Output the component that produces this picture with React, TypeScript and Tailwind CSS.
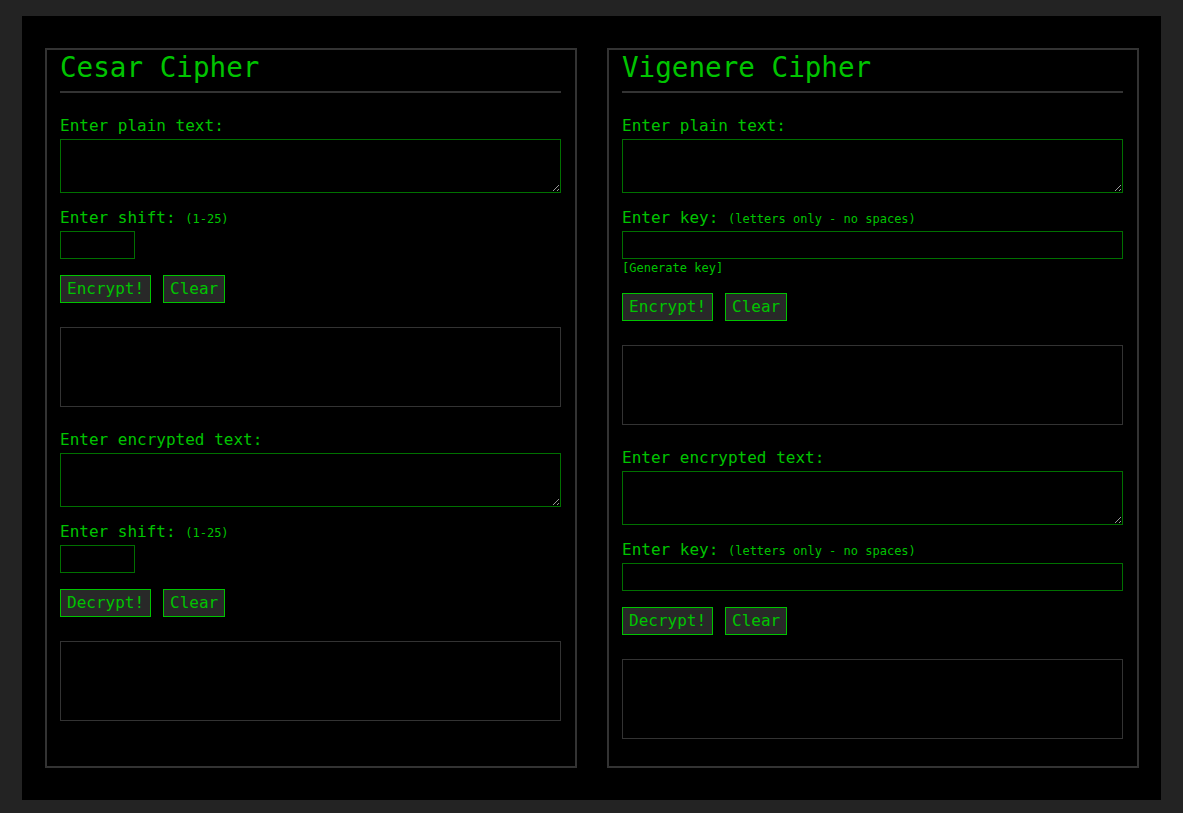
import React from 'react';

const mono = { fontFamily: '"DejaVu Sans Mono", "Liberation Mono", monospace' };

function Label({ text, hint }: { text: string; hint?: string }) {
  return (
    <div className="h-6 overflow-hidden text-[16px] leading-6 text-[#00c400]">
      {text}
      {hint && (
        <>
          {' '}
          <span className="text-[12px] leading-none">{hint}</span>
        </>
      )}
    </div>
  );
}

function Field({ wide }: { wide?: boolean }) {
  return (
    <input
      type="text"
      className={`block mt-px h-[28px] bg-black border border-[#007000] text-[#00c400] text-[16px] px-1 outline-none ${wide ? 'w-full' : 'w-[75px]'}`}
    />
  );
}

function Area() {
  return (
    <textarea className="block mt-px w-full h-[54px] bg-black border border-[#007000] text-[#00c400] text-[16px] p-1 outline-none [color-scheme:dark]" />
  );
}

function Btn({ children }: { children: React.ReactNode }) {
  return (
    <button className="h-[28px] px-[6px] bg-[#282828] border border-[#00c400] text-[#00c400] text-[16px] leading-none">
      {children}
    </button>
  );
}

function Output() {
  return <div className="mt-6 h-[80px] border border-[#333]" />;
}

function Section({
  label,
  action,
  keyed,
  generate,
}: {
  label: string;
  action: string;
  keyed: boolean;
  generate?: boolean;
}) {
  return (
    <div className="mt-[21px]">
      <Label text={label} />
      <Area />
      <div className="mt-[13px]">
        {keyed ? (
          <Label text="Enter key:" hint="(letters only - no spaces)" />
        ) : (
          <Label text="Enter shift:" hint="(1-25)" />
        )}
        <Field wide={keyed} />
        {generate && (
          <div className="h-[18px] text-[12px] leading-[18px] text-[#00c400]">[Generate key]</div>
        )}
      </div>
      <div className="mt-4 flex gap-3">
        <Btn>{action}</Btn>
        <Btn>Clear</Btn>
      </div>
      <Output />
    </div>
  );
}

function Panel({ title, keyed }: { title: string; keyed: boolean }) {
  return (
    <div className="border-2 border-[#333] pl-[13px] pr-[14px] pb-[27px]">
      <h1 className="mt-px h-[33px] text-[27.6px] leading-[33px] text-[#00c400] font-normal">{title}</h1>
      <div className="mt-[7px] h-[2px] bg-[#333]" />
      <Section label="Enter plain text:" action="Encrypt!" keyed={keyed} generate={keyed} />
      <Section label="Enter encrypted text:" action="Decrypt!" keyed={keyed} />
    </div>
  );
}

export default function App() {
  return (
    <div className="min-h-screen bg-[#232323] px-[22px] pt-4 pb-[14px]" style={mono}>
      <div className="bg-black pl-[23px] pr-[22px] py-8 grid grid-cols-2 gap-[30px]">
        <Panel title="Cesar Cipher" keyed={false} />
        <Panel title="Vigenere Cipher" keyed />
      </div>
    </div>
  );
}
